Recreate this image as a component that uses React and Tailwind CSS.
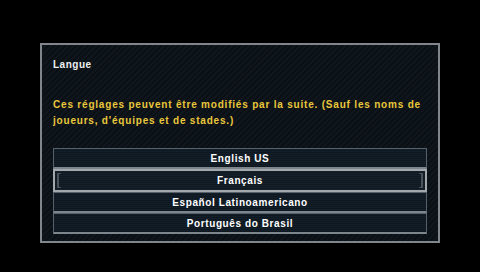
import React from 'react';

const LANGUAGES = ['English US', 'Français', 'Español Latinoamericano', 'Português do Brasil'];

const SELECTED = 1;

const LanguageButton = ({ label, selected }) => {
  if (selected) {
    return (
      <div className="relative h-[23px] flex items-center justify-center border-2 border-[#a3a8ad] bg-[repeating-linear-gradient(180deg,#15202b_0px,#15202b_1px,#101922_1px,#101922_2px)]">
        {/* corner brackets */}
        <span className="absolute left-[2px] top-[2px] bottom-[2px] w-[4px] border-l-2 border-t border-b border-[#4a535b]" />
        <span className="absolute right-[2px] top-[2px] bottom-[2px] w-[4px] border-r-2 border-t border-b border-[#4a535b]" />
        <span className="text-[10px] font-bold text-white tracking-[0.6px]">{label}</span>
      </div>
    );
  }
  return (
    <div className="h-[21px] flex items-center justify-center border border-[#56606a] border-b-2 border-b-[#7e868d] bg-[repeating-linear-gradient(180deg,#132029_0px,#132029_1px,#0e1720_1px,#0e1720_2px)]">
      <span className="text-[10px] font-bold text-white tracking-[0.6px]">{label}</span>
    </div>
  );
};

export default function App() {
  return (
    <div className="w-[480px] h-[272px] bg-black pt-[43px] pl-[40px] font-['Liberation_Sans',Arial,sans-serif]">
      <div className="w-[400px] h-[200px] border-2 border-[#80868b] bg-[repeating-linear-gradient(135deg,#0b1015_0px,#0b1015_2px,#10161d_2px,#10161d_4px)] pl-[11px] pr-[11px] flex flex-col">
        <div className="mt-[13px] text-[10px] font-bold text-[#eef0f2] tracking-[0.5px] leading-[14px]">Langue</div>
        <p className="mt-[25px] w-[380px] text-[10px] font-bold text-[#e9c73c] tracking-[0.8px] leading-[16px]">
          Ces réglages peuvent être modifiés par la suite. (Sauf les noms de joueurs, d'équipes et de stades.)
        </p>
        <div className="mt-[19px] flex flex-col">
          {LANGUAGES.map((lang, i) => (
            <LanguageButton key={lang} label={lang} selected={i === SELECTED} />
          ))}
        </div>
      </div>
    </div>
  );
}
